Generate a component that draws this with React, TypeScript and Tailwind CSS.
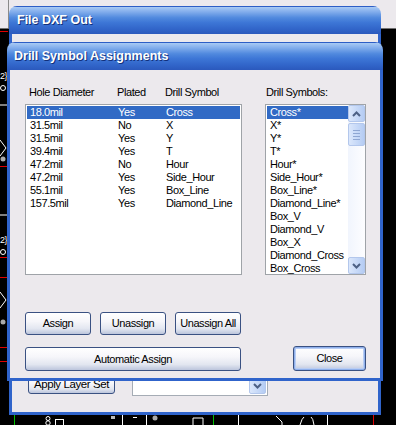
const holes = [
    { size: "18.0mil", plated: "Yes", symbol: "Cross" },
    { size: "31.5mil", plated: "No", symbol: "X" },
    { size: "31.5mil", plated: "Yes", symbol: "Y" },
    { size: "39.4mil", plated: "Yes", symbol: "T" },
    { size: "47.2mil", plated: "No", symbol: "Hour" },
    { size: "47.2mil", plated: "Yes", symbol: "Side_Hour" },
    { size: "55.1mil", plated: "Yes", symbol: "Box_Line" },
    { size: "157.5mil", plated: "Yes", symbol: "Diamond_Line" },
];

const symbols = [
    "Cross*",
    "X*",
    "Y*",
    "T*",
    "Hour*",
    "Side_Hour*",
    "Box_Line*",
    "Diamond_Line*",
    "Box_V",
    "Diamond_V",
    "Box_X",
    "Diamond_Cross",
    "Box_Cross",
];

const titleBar =
    "bg-[linear-gradient(to_bottom,#a9caf4_0%,#82adec_18%,#5089de_40%,#3d76d6_58%,#3165c9_82%,#2b59bd_100%)]";
const titleText =
    "font-['Liberation_Sans',Arial,sans-serif] text-[12.5px] font-bold text-white [text-shadow:1px_1px_0_#12307a]";
const xpButton =
    "flex items-center justify-center rounded-[3px] border border-[#3a5182] bg-[linear-gradient(to_bottom,#ffffff_0%,#f6f6fa_40%,#e2e6f0_75%,#bcc5dc_100%)] text-black";

function Chevron({ down }: { down?: boolean }) {
    return (
        <svg width="9" height="6" viewBox="0 0 9 6">
            <path
                d={down ? "M1 1 L4.5 4.5 L8 1" : "M1 5 L4.5 1.5 L8 5"}
                fill="none"
                stroke="#4d6185"
                strokeWidth="2"
            />
        </svg>
    );
}

function ScrollButton({ children }: { children: React.ReactNode }) {
    return (
        <div className="flex h-[17px] w-[17px] items-center justify-center rounded-[2px] border border-[#b3c7ec] bg-[linear-gradient(to_right,#dbe7fb,#c4d7f7_60%,#b5ccf3)]">
            {children}
        </div>
    );
}

function CadBackground() {
    return (
        <svg className="absolute inset-0" width="396" height="425" viewBox="0 0 396 425">
            <rect x="0" y="0" width="396" height="425" fill="#000" />
            <rect x="0" y="0" width="396" height="28" fill="#ece9ed" />
            <line x1="0" y1="28.5" x2="396" y2="28.5" stroke="#707070" />
            <line x1="8.5" y1="0" x2="8.5" y2="28" stroke="#8a8a8a" />
            {/* left strip */}
            {[31, 166, 257, 277, 347, 361].map((y) => (
                <line key={y} x1="0" y1={y + 0.5} x2="8" y2={y + 0.5} stroke="#e00000" />
            ))}
            <text x="0" y="79" fontSize="9" fill="#fff" fontFamily="Liberation Sans">{"2}"}</text>
            <text x="0" y="243" fontSize="9" fill="#fff" fontFamily="Liberation Sans">{"2}"}</text>
            <circle cx="3" cy="88" r="2.5" fill="none" stroke="#fff" />
            <circle cx="3" cy="252" r="2.5" fill="none" stroke="#fff" />
            <path d="M0 140 L6 148 L0 156" fill="none" stroke="#fff" />
            <path d="M0 292 L6 300 L0 308" fill="none" stroke="#fff" />
            <circle cx="3" cy="159" r="2.5" fill="#aaa" />
            <circle cx="3" cy="322" r="2.5" fill="#aaa" />
            <line x1="0" y1="105" x2="8" y2="105" stroke="#fff" />
            <line x1="0" y1="215" x2="8" y2="215" stroke="#fff" />
            {/* bottom strip */}
            <line x1="14.5" y1="415" x2="14.5" y2="425" stroke="#00c000" />
            <line x1="213.5" y1="415" x2="213.5" y2="425" stroke="#00c000" />
            <line x1="122.5" y1="415" x2="122.5" y2="425" stroke="#fff" />
            <line x1="146.5" y1="415" x2="146.5" y2="425" stroke="#fff" />
            <line x1="238.5" y1="415" x2="238.5" y2="425" stroke="#fff" />
            <line x1="327.5" y1="415" x2="327.5" y2="425" stroke="#fff" />
            <line x1="373.5" y1="415" x2="373.5" y2="425" stroke="#e00000" />
            <circle cx="48" cy="418.5" r="2" fill="none" stroke="#fff" />
            <circle cx="48" cy="423" r="2.2" fill="none" stroke="#fff" />
            <rect x="55.5" y="419.5" width="8" height="6" fill="none" stroke="#fff" />
            <rect x="111" y="416" width="4" height="3" fill="#bbb" />
            <line x1="133" y1="417.5" x2="137" y2="417.5" stroke="#fff" />
            <circle cx="155" cy="418" r="2.5" fill="#aaa" />
            <path d="M193 418 L203 418 M193 418 L193 425 M203 418 L203 425" stroke="#fff" />
            <path d="M276 416 L282 422 L282 425" stroke="#fff" fill="none" />
            <path d="M300 425 Q302 418 304 417 M311 417 Q313 418 314 425" stroke="#fff" fill="none" />
        </svg>
    );
}

export default function App() {
    return (
        <div className="relative h-[425px] w-[396px] overflow-hidden bg-black font-['Liberation_Sans',Arial,sans-serif] text-[11px] tracking-[-0.4px] text-black">
            <CadBackground />

            {/* File DXF Out (behind) */}
            <div className="absolute left-[9px] top-[6px] flex h-[409px] w-[372px] flex-col overflow-hidden rounded-t-[8px]">
                <div className={`flex h-[28px] items-center border-t border-[#2d5ec6] pl-[8px] tracking-normal ${titleBar}`}>
                    <span className={titleText}>File DXF Out</span>
                </div>
                <div className="flex flex-1 flex-col justify-end border-x-[3px] border-b-[3px] border-[#3064cb] bg-[#ece9ed] pb-[16px] pl-[16px]">
                    <div className="flex items-end gap-[17px]">
                        <div className={`${xpButton} mb-[2px] h-[18px] w-[87px] text-[11.5px]`}>
                            Apply Layer Set
                        </div>
                        <div className="flex h-[21px] w-[136px] justify-end border border-[#a5acb5] bg-white p-[1px]">
                            <ScrollButton>
                                <Chevron down />
                            </ScrollButton>
                        </div>
                    </div>
                </div>
            </div>

            {/* Drill Symbol Assignments (front) */}
            <div className="absolute left-[7px] top-[42px] flex h-[339px] w-[376px] flex-col overflow-hidden rounded-t-[8px]">
                <div className={`flex h-[28px] items-center border-t border-[#2d5ec6] pl-[7px] tracking-normal ${titleBar}`}>
                    <span className={titleText}>Drill Symbol Assignments</span>
                </div>
                <div className="flex flex-1 flex-col border-x-[3px] border-b-[3px] border-[#3064cb] bg-[#ece9ed] pl-[15px] pt-[16px]">
                    <div className="flex gap-[23px]">
                        {/* holes */}
                        <div className="flex w-[217px] flex-col">
                            <div className="flex h-[13px] items-center pl-[4px] leading-[13px]">
                                <span className="w-[88px]">Hole Diameter</span>
                                <span className="w-[48px]">Plated</span>
                                <span>Drill Symbol</span>
                            </div>
                            <div className="mt-[5px] h-[171px] border border-[#9fa3a8] bg-white p-[1px]">
                                {holes.map((h, i) => (
                                    <div
                                        key={i}
                                        className={`flex h-[13px] items-center pl-[3px] leading-[13px] ${
                                            i === 0 ? "bg-[#316ac5] text-white" : ""
                                        }`}
                                    >
                                        <span className="w-[88px]">{h.size}</span>
                                        <span className="w-[48px]">{h.plated}</span>
                                        <span>{h.symbol}</span>
                                    </div>
                                ))}
                            </div>
                        </div>

                        {/* symbols */}
                        <div className="flex w-[101px] flex-col">
                            <div className="h-[13px] pl-[1px] leading-[13px]">Drill Symbols:</div>
                            <div className="mt-[5px] flex h-[171px] border border-[#9fa3a8] bg-white">
                                <div className="flex-1 p-[1px] pr-0">
                                    {symbols.map((s, i) => (
                                        <div
                                            key={s}
                                            className={`h-[13px] pl-[3px] leading-[13px] ${
                                                i === 0 ? "bg-[#316ac5] text-white" : ""
                                            }`}
                                        >
                                            {s}
                                        </div>
                                    ))}
                                </div>
                                <div className="flex w-[17px] flex-col bg-[linear-gradient(to_right,#f1f5fd,#fdfdff)]">
                                    <ScrollButton>
                                        <Chevron />
                                    </ScrollButton>
                                    <div className="mt-[1px] flex h-[23px] w-[17px] flex-col items-center justify-center gap-[2px] rounded-[2px] border border-[#b3c7ec] bg-[linear-gradient(to_right,#dbe7fb,#c4d7f7_60%,#b5ccf3)]">
                                        <div className="h-px w-[7px] bg-[#8ea6d2]" />
                                        <div className="h-px w-[7px] bg-[#8ea6d2]" />
                                        <div className="h-px w-[7px] bg-[#8ea6d2]" />
                                        <div className="h-px w-[7px] bg-[#8ea6d2]" />
                                    </div>
                                    <div className="flex-1" />
                                    <ScrollButton>
                                        <Chevron down />
                                    </ScrollButton>
                                </div>
                            </div>
                        </div>
                    </div>

                    <div className="mt-[37px] flex items-end">
                        <div className="flex w-[217px] flex-col gap-[12px]">
                            <div className="flex gap-[9px]">
                                <div className={`${xpButton} h-[23px] w-[66px]`}>Assign</div>
                                <div className={`${xpButton} h-[23px] w-[66px]`}>Unassign</div>
                                <div className={`${xpButton} h-[23px] w-[66px]`}>Unassign All</div>
                            </div>
                            <div className={`${xpButton} h-[24px] w-[216px]`}>Automatic Assign</div>
                        </div>
                        <div
                            className={`${xpButton} ml-[51px] h-[25px] w-[73px] border-[#2b4a8c] shadow-[inset_0_0_0_1px_#8fb0ec,inset_0_0_0_2px_#b9cdf3]`}
                        >
                            Close
                        </div>
                    </div>
                </div>
            </div>
        </div>
    );
}
